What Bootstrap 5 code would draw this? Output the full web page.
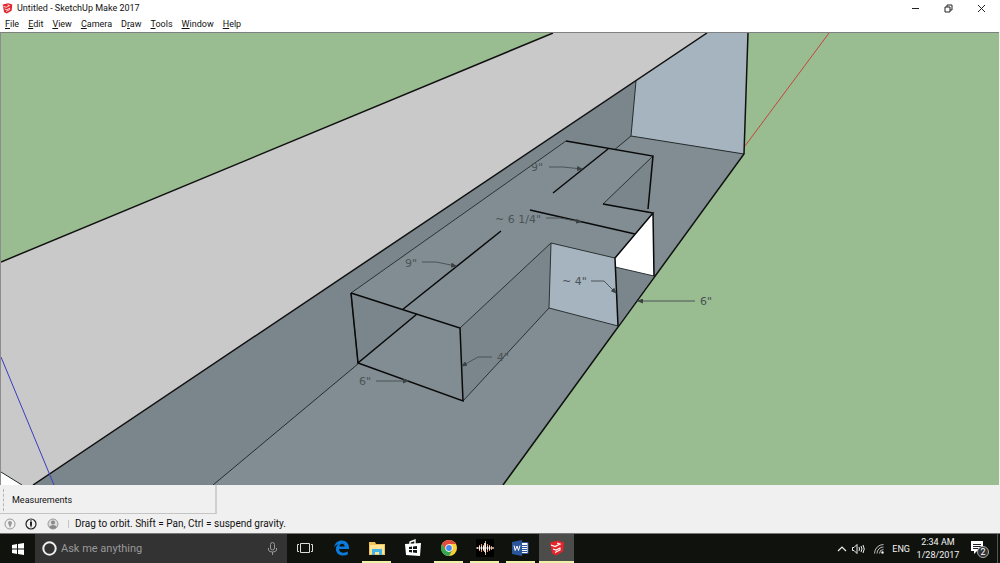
<!DOCTYPE html>
<html lang="en">
<head>
<meta charset="utf-8">
<meta name="viewport" content="width=device-width, initial-scale=1">
<title>Untitled - SketchUp Make 2017</title>
<link href="https://cdn.jsdelivr.net/npm/bootstrap@5.3.0/dist/css/bootstrap.min.css" rel="stylesheet">
<style>
body{font-family:Roboto,"Open Sans",sans-serif;font-size:9px;line-height:12px;color:#111;background:#f0f0f0}
svg{display:block;flex:none}
button{border:0;background:none;padding:0;color:inherit;font:inherit}
.titlebar{height:16px;padding:0 2px}
.win-btn{width:33px;height:16px;display:flex;align-items:center;justify-content:center}
.menubar{height:16px}
.menubar button{padding:0 4px 0 5px}
.viewport{border-top:1px solid #808080;border-left:1px solid #8c8c8c;margin-right:1px;min-height:0;background:#99bd91}
.dim{font-family:"DejaVu Sans",sans-serif;font-size:11px;fill:#4c5356}
.tray-row{height:29px}
.measure{width:217px;height:29px;border-right:2px solid #d0d0d0;border-bottom:1px solid #c4c4c4;padding:2px 0 0 3px}
.grip{width:1px;height:22px;border-left:1px dashed #b5b5b5}
.statusbar{height:19px;padding-left:4px}
.status-text{font-size:10px}
.taskbar{height:30px;background:#10120e;border-top:1px solid #777;color:#f2f2f2}
.start{width:35px}
.search{width:252px;background:#333;padding:0 10px 0 7px}
.search input{border:0;background:none;outline:0;color:#ddd;font-size:11px;line-height:16px;padding:0;min-width:0}
.search input::placeholder{color:#999;opacity:1}
.task{width:36px;display:flex;align-items:center;justify-content:center;border-bottom:2px solid transparent;background-clip:padding-box}
.running{border-bottom-color:#f0f0a6;width:29px;margin:0 4px 0 3px}
.current{border-bottom-color:#f0f0a6;background-color:#4c4d4a;width:35px}
.clock{width:56px;line-height:13px}
</style>
</head>
<body>
<svg width="0" height="0" class="position-absolute" aria-hidden="true">
<symbol id="su" viewBox="0 0 16 16"><path fill="#e3262b" d="M1 3 9 1l6 2-1 9-7 4-4-2z"/><path fill="none" stroke="#fff" stroke-width="1.200" d="M2 5.500l4 1.500 5-2.500L8 3.500M4 9.500l3 1 4-2M6 13l5-2.500V8"/></symbol>
</svg>
<div class="d-flex flex-column vh-100 overflow-hidden">
<header class="bg-white">
  <div class="titlebar d-flex align-items-center">
    <svg width="11" height="12"><use href="#su"/></svg>
    <span class="ms-1">Untitled - SketchUp Make 2017</span>
    <div class="d-flex ms-auto">
      <button class="win-btn" aria-label="Minimize"><svg width="9" height="9"><path stroke="#222" d="M1 4.500h7"/></svg></button>
      <button class="win-btn" aria-label="Restore"><svg width="9" height="9" fill="none" stroke="#222"><path d="M1 3h5v5H1zM3 3V1h5v5H6"/></svg></button>
      <button class="win-btn" aria-label="Close"><svg width="9" height="9"><path stroke="#222" d="m1 1 7 7m0-7L1 8"/></svg></button>
    </div>
  </div>
  <nav class="menubar d-flex align-items-center" aria-label="Main menu">
    <button><u>F</u>ile</button><button><u>E</u>dit</button><button><u>V</u>iew</button><button><u>C</u>amera</button><button>D<u>r</u>aw</button><button><u>T</u>ools</button><button><u>W</u>indow</button><button><u>H</u>elp</button>
  </nav>
</header>
<main class="viewport flex-fill d-flex">
<svg class="w-100 h-100" viewBox="1 33 998 452" preserveAspectRatio="xMidYMid slice" role="img" aria-label="Model">
  <defs><marker id="arrow" viewBox="0 0 6 5" refX="5" refY="2.500" markerWidth="6" markerHeight="5" orient="auto" markerUnits="userSpaceOnUse"><path fill="#3c4244" d="M0 0 6 2.500 0 5z"/></marker></defs>
  <path fill="#c9c9c9" d="M1 262 553 33h154L33 485H1z"/>
  <path fill="#fff" d="M1 472l21 13H1z"/>
  <path fill="#7a868c" d="M636 81 33 485h180L631 136z"/>
  <path fill="#a5b4be" d="M707 33h41l-4 121-113-18 5-55z"/>
  <path fill="#818d93" d="M631 136l113 18-241 331H213z"/>
  <path fill="none" stroke="#252a2c" stroke-width="1" d="M636 81l-5 55 113 18M631 136 213 485M1 472l21 13"/>
  <path fill="none" stroke="#111" stroke-width="1.500" d="M1 262 553 33M707 33 33 485M748 33l-4 121-241 331"/>
  <path stroke="#c0463d" d="M829 33 745 146"/>
  <path stroke="#3a3cc0" d="M1 357l53 128"/>
  <path fill="#818d93" d="M351 293l215-152 87 15-50 48 50 9-38 45-64-15-91 85 3 73-105-38z"/>
  <path fill="#7a868c" d="M351 293l66 21-59 49zM460 328l91-85-2 65-86 93zM653 156l-50 48 45 9zM615 267l39 9-36 50z"/>
  <path fill="#a5b4be" d="M551 243l64 15 3 68-69-18z"/>
  <path fill="#fff" d="M615 258l38-45 1 63-39-9z"/>
  <path fill="none" stroke="#2c3234" d="M351 293 566 141M653 156l-50 48M460 328l91-85 64 15M551 243l-2 65 69 18M549 308l-86 93M615 267l39 9M351 293l7 70"/>
  <path fill="none" stroke="#090909" stroke-width="1.500" d="M351 293l109 35 3 73-105-38 59-49M351 293l7 70M402 310l99-79M566 141l87 15-5 53M553 193l55-44M603 204l50 9-38 45 3 68M653 213l1 63M530 210l105 24"/>
  <g fill="none" stroke="#4c5356"><path marker-end="url(#arrow)" d="M549 167h14l19 2"/><path marker-end="url(#arrow)" d="M546 218h14l21 4"/><path marker-end="url(#arrow)" d="M422 262h14l20 4"/><path marker-end="url(#arrow)" d="M376 381h32"/><path marker-end="url(#arrow)" d="M492 357h-14l-16 9"/><path marker-end="url(#arrow)" d="M591 281h13l12 12"/><path marker-end="url(#arrow)" d="M695 301h-57"/></g>
  <g class="dim"><text x="531" y="171">9"</text><text x="495" y="223">~ 6 1/4"</text><text x="405" y="267">9"</text><text x="359" y="385">6"</text><text x="497" y="361">4"</text><text x="562" y="285">~ 4"</text><text x="700" y="305">6"</text></g>
</svg>
</main>
<footer>
  <div class="tray-row">
    <div class="measure d-flex align-items-center"><span class="grip"></span><span class="ms-2">Measurements</span></div>
  </div>
  <div class="statusbar d-flex align-items-center">
    <svg width="12" height="12" fill="none" stroke="#999"><circle cx="6" cy="6" r="5"/><path fill="#999" stroke="none" d="M6 10 4 5a2 2 0 1 1 4 0z"/></svg>
    <svg class="ms-2" width="14" height="12" fill="none" stroke="#222" stroke-width="1.200"><circle cx="7" cy="6" r="5"/><path fill="#222" stroke="none" d="M7 2l1 1-1 1h1v3l-1 3-1-3V4h1L6 3z"/></svg>
    <svg class="ms-2" width="14" height="12"><circle cx="7" cy="6" r="5" fill="#ddd" stroke="#999"/><circle cx="7" cy="4.500" r="2" fill="#888"/><path fill="#888" d="M3 9q4-4 8 0-4 4-8 0"/></svg>
    <svg class="ms-2" width="3" height="8"><path stroke="#999" d="M0 0v8"/></svg>
    <span class="status-text ms-1">Drag to orbit. Shift = Pan, Ctrl = suspend gravity.</span>
  </div>
  <div class="taskbar d-flex align-items-stretch">
    <button class="start d-flex align-items-center justify-content-center" aria-label="Start"><svg width="12" height="12" fill="#fff"><path d="M0 2l5-1v4.500H0zM6 1l6-1v5.500H6zM0 6.500h5V11l-5-1zM6 6.500h6V12l-6-1z"/></svg></button>
    <div class="search d-flex align-items-center">
      <svg width="15" height="15"><circle cx="7.500" cy="7.500" r="6.200" fill="none" stroke="#eee" stroke-width="2"/></svg>
      <input class="flex-fill ms-1" type="text" placeholder="Ask me anything" aria-label="Search">
      <svg width="9" height="13" fill="none" stroke="#999"><rect x="2.500" y=".5" width="4" height="7.500" rx="2"/><path d="M.5 6v2q0 2 4 2t4-2V6M4.500 10v3"/></svg>
    </div>
    <button class="task" aria-label="Task view"><svg width="16" height="12" fill="none" stroke="#ddd"><path d="M3.500 1.500h9v9h-9zM2 2.500H.5v7H2M14 2.500h1.500v7H14"/></svg></button>
    <button class="task" aria-label="Edge"><svg width="15" height="16" viewBox="0 0 16 16"><path fill="#0a7bdc" d="M0 7.500C1 2.500 4 0 8.500 0 13 0 16 3.500 16 7.500V9H5.500c0 3 2.500 4 5 4 1.600 0 3-.5 4.200-1.200v3.100C13.300 15.700 11.700 16 10 16c-5 0-8-3-8-7 0-2.600 1.400-4.300 3.200-5.300C2.900 4.200 1 5.600 0 7.500zM5.700 6.300h5.600C11.300 4.500 10.200 3.500 8.600 3.500S5.900 4.700 5.700 6.300z"/></svg></button>
    <button class="task running" aria-label="File Explorer"><svg width="16" height="14"><path fill="#efc45b" d="M0 1h6l1 2h9v11H0z"/><path fill="#ffe593" d="M1 4h14v9H1z"/><path fill="#42b4e8" d="M3 8h10v6h-3v-3H6v3H3z"/></svg></button>
    <button class="task" aria-label="Store"><svg width="16" height="17"><path fill="none" stroke="#fff" stroke-width="1.400" d="M5 6V3l5-2v4"/><path fill="#fff" d="M0 5l16-1-1 13-14-1z"/><path fill="#11150f" d="M4 8l3-.5V10H4zM8 7.400l4-.4v3H8zM4 11h3v2.500L4 13zM8 11h4v3l-4-.4z"/></svg></button>
    <button class="task running" aria-label="Chrome"><svg width="16" height="16"><circle cx="8" cy="8" r="8" fill="#fbcf36"/><path fill="#e24b3e" d="M1.100 4A8 8 0 0 1 14.900 4H8L4.500 10z"/><path fill="#32a653" d="M1.100 4A8 8 0 0 0 8 16l3.500-6L8 12 4.500 10z"/><circle cx="8" cy="8" r="3.700" fill="#fff"/><circle cx="8" cy="8" r="2.900" fill="#4a87ed"/></svg></button>
    <button class="task running" aria-label="Audio editor"><svg width="18" height="18"><path fill="#000" d="M0 0h18v18H0z"/><path stroke="#e29362" d="M1.500 8v2M3.500 6v6M5.500 5v8M7.500 6v6M9.500 2v14M11.500 5v8M13.500 6v6M15.500 7v4M17 8v2"/><path stroke="#fff" stroke-opacity=".8" d="M0 9h18M3.500 7v4M5.500 7v4M7.500 7v4M8.500 4v9M9.500 4v10M11.500 7v4M13.500 7v4"/></svg></button>
    <button class="task running" aria-label="Word"><svg width="17" height="16"><path fill="#fff" stroke="#2a5699" d="M8 2.500h8v11H8z"/><path stroke="#2a5699" d="M10 5.500h5M10 7.500h5M10 9.500h5M10 11.500h5"/><path fill="#2a5699" d="M0 2l10-2v16L0 14z"/><path fill="none" stroke="#fff" d="M2 5.500l1.200 5L5 6l1.500 4.500L8 5.500"/></svg></button>
    <button class="task current" aria-label="SketchUp"><svg width="16" height="17"><use href="#su"/></svg></button>
    <div class="d-flex align-items-center ms-auto">
      <svg width="10" height="7" fill="none" stroke="#eee" stroke-width="1.200"><path d="m1 6 4-4 4 4"/></svg>
      <svg class="ms-1" width="15" height="12" fill="none" stroke="#eee"><path d="M1.500 4.500H3l3-3v9l-3-3H1.500zM8 4q1 2 0 4M10 3q2 3 0 6M12 2q2.500 4 0 8"/></svg>
      <svg class="ms-2" width="10" height="10" fill="none" stroke="#bbb"><path d="M.5 9.500A9 9 0 0 1 9.500.5M3 9.500A6.500 6.500 0 0 1 9.500 3M5.500 9.500a4 4 0 0 1 4-4"/><circle cx="8.500" cy="8.500" r="1" fill="#fff"/></svg>
      <span class="ms-2">ENG</span>
      <time class="clock text-center">2:34 AM<br>1/28/2017</time>
      <button class="ms-1 me-2" aria-label="2 notifications"><svg width="19" height="18"><path fill="#fff" d="M1 1h12v10H7l-3 3v-3H1z"/><path stroke="#222" d="M3 4.500h8M3 6.500h8M3 8.500h5"/><circle cx="13" cy="12" r="5.500" fill="#333" stroke="#aaa"/><text x="13" y="15" fill="#fff" font-size="9" text-anchor="middle">2</text></svg></button>
      <svg width="3" height="29"><path stroke="#555" d="M.5 0v29"/></svg>
    </div>
  </div>
</footer>
</div>
<script src="https://cdn.jsdelivr.net/npm/bootstrap@5.3.0/dist/js/bootstrap.bundle.min.js"></script>
</body>
</html>
